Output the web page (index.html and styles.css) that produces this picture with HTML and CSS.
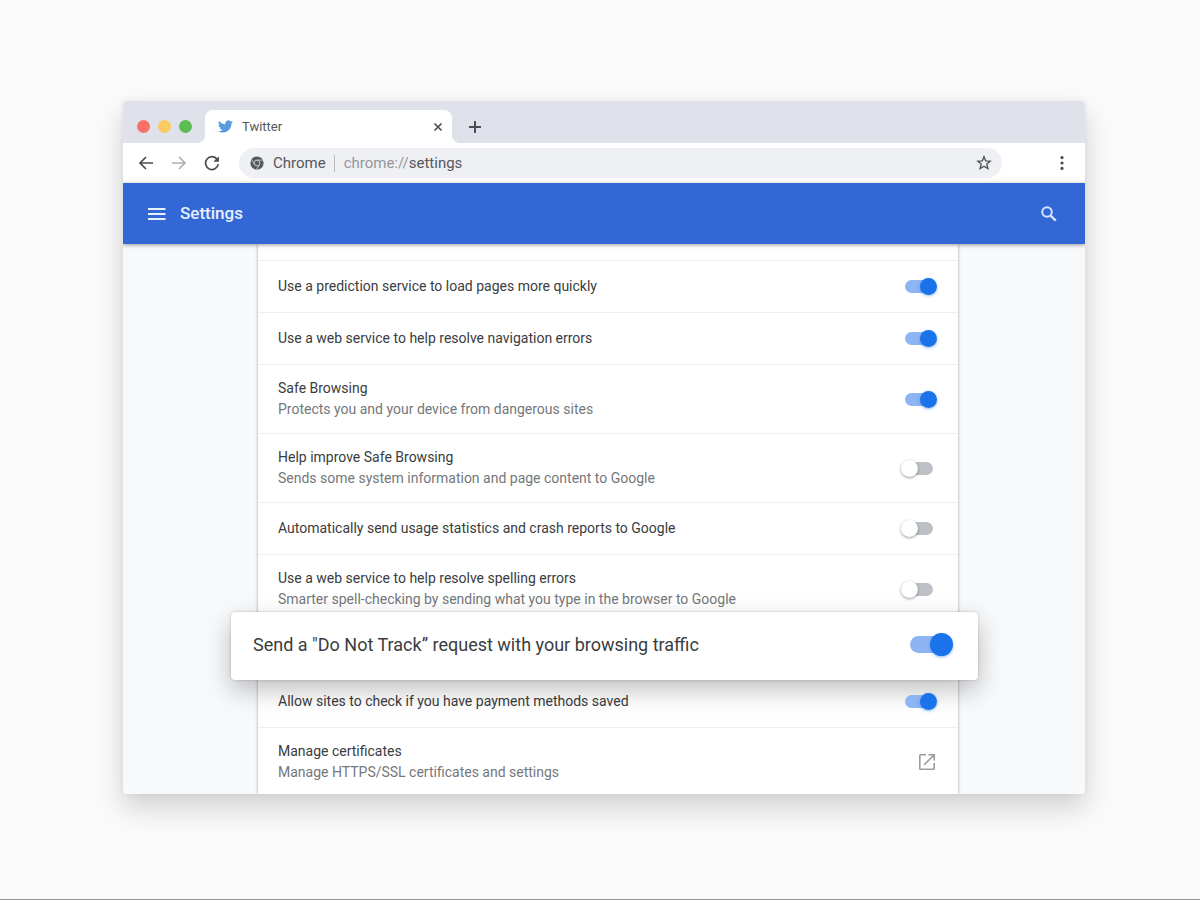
FILE: index.html
```
<!DOCTYPE html>
<html lang="en">
<head>
<meta charset="utf-8">
<title>Settings</title>
<link rel="stylesheet" href="styles.css">
</head>
<body>
<div class="window">
  <div class="tabstrip">
    <div class="lights"><span class="light red"></span><span class="light yellow"></span><span class="light green"></span></div>
    <div class="tab">
      <svg class="bird" viewBox="0 0 24 24" aria-hidden="true"><path fill="#5a9bdf" d="M23.95 4.57a10 10 0 0 1-2.82.78 4.96 4.96 0 0 0 2.16-2.72c-.95.55-2 .95-3.13 1.18a4.92 4.92 0 0 0-8.38 4.48C7.69 8.1 4.07 6.13 1.64 3.16a4.93 4.93 0 0 0 1.52 6.57 4.9 4.9 0 0 1-2.23-.61v.06a4.92 4.92 0 0 0 3.95 4.83 5 5 0 0 1-2.21.08 4.94 4.94 0 0 0 4.6 3.42A9.87 9.87 0 0 1 0 19.54a13.99 13.99 0 0 0 7.55 2.21c9.05 0 14-7.5 14-13.98 0-.21 0-.42-.02-.63a9.94 9.94 0 0 0 2.46-2.55z"/></svg>
      <span class="tab-title">Twitter</span>
      <button class="icon-btn" aria-label="Close tab"><svg width="10" height="10" viewBox="0 0 10 10"><path d="M1.5 1.5l7 7M8.5 1.5l-7 7" stroke="#4a4d51" stroke-width="1.7"/></svg></button>
    </div>
    <button class="icon-btn new-tab" aria-label="New tab"><svg width="14" height="14" viewBox="0 0 14 14"><path d="M7 1v12M1 7h12" stroke="#4a4d51" stroke-width="2"/></svg></button>
  </div>
  <div class="toolbar">
    <button class="icon-btn" aria-label="Back"><svg width="16" height="16" viewBox="0 0 16 16"><path d="M15 8H2M8 2L2 8l6 6" fill="none" stroke="#4a4d51" stroke-width="1.7"/></svg></button>
    <button class="icon-btn" aria-label="Forward"><svg width="16" height="16" viewBox="0 0 16 16"><path d="M1 8h13M8 2l6 6-6 6" fill="none" stroke="#aeb0b3" stroke-width="1.7"/></svg></button>
    <button class="icon-btn" aria-label="Reload"><svg width="16" height="16" viewBox="0 0 16 16"><path d="M13.2 4.4A6.4 6.4 0 1 0 14.3 9.2" fill="none" stroke="#4a4d51" stroke-width="1.7"/><path d="M14.9 1.2v5.6H9.3z" fill="#4a4d51"/></svg></button>
    <div class="omnibox">
      <svg class="chrome" viewBox="0 0 14 14" aria-hidden="true"><circle cx="7" cy="7" r="6.6" fill="#55585c"/><circle cx="7" cy="7" r="2.9" fill="#55585c" stroke="#d4d6d9" stroke-width=".9"/><path d="M7 4.1h6M4.5 8.5L1.5 3.4M9.5 8.5l-3 5.1" stroke="#d4d6d9" stroke-width=".8"/></svg>
      <span class="site">Chrome</span>
      <span class="divider"></span>
      <span class="url"><span class="scheme">chrome://</span>settings</span>
      <button class="icon-btn" aria-label="Bookmark"><svg width="16" height="16" viewBox="0 0 16 16"><path d="M8 1.7l1.7 4.2 4.5.3-3.4 2.9 1.1 4.5L8 11.2l-3.9 2.4 1.1-4.5L1.8 6.2l4.5-.3z" fill="none" stroke="#4a4d51" stroke-width="1.3"/></svg></button>
    </div>
    <button class="icon-btn more" aria-label="Menu"><svg width="6" height="16" viewBox="0 0 6 16"><g fill="#4a4d51"><circle cx="3" cy="2.6" r="1.6"/><circle cx="3" cy="8" r="1.6"/><circle cx="3" cy="13.4" r="1.6"/></g></svg></button>
  </div>
  <header class="header">
    <button class="icon-btn" aria-label="Main menu"><svg width="18" height="14" viewBox="0 0 18 14"><path d="M0 2h17.5M0 7h17.5M0 12h17.5" stroke="#e8f0fe" stroke-width="2"/></svg></button>
    <h1 class="title">Settings</h1>
    <button class="icon-btn" aria-label="Search settings"><svg width="18" height="18" viewBox="0 0 18 18"><circle cx="7" cy="7" r="4.8" fill="none" stroke="#d6e4ff" stroke-width="2"/><path d="M10.5 10.5l5.2 5.2" stroke="#d6e4ff" stroke-width="2.4"/></svg></button>
  </header>
  <main class="content">
    <div class="list">
      <div class="row-end"></div>
      <label class="row"><span class="name">Use a prediction service to load pages more quickly</span><input class="toggle" type="checkbox" checked></label>
      <label class="row"><span class="name">Use a web service to help resolve navigation errors</span><input class="toggle" type="checkbox" checked></label>
      <label class="row"><span class="name">Safe Browsing<span class="desc">Protects you and your device from dangerous sites</span></span><input class="toggle" type="checkbox" checked></label>
      <label class="row"><span class="name">Help improve Safe Browsing<span class="desc">Sends some system information and page content to Google</span></span><input class="toggle" type="checkbox"></label>
      <label class="row"><span class="name">Automatically send usage statistics and crash reports to Google</span><input class="toggle" type="checkbox"></label>
      <label class="row"><span class="name">Use a web service to help resolve spelling errors<span class="desc">Smarter spell-checking by sending what you type in the browser to Google</span></span><input class="toggle" type="checkbox"></label>
      <div class="row spotlight">
        <label class="card"><span class="name">Send a "Do Not Track” request with your browsing traffic</span><input class="toggle large" type="checkbox" checked></label>
      </div>
      <label class="row"><span class="name">Allow sites to check if you have payment methods saved</span><input class="toggle" type="checkbox" checked></label>
      <div class="row last"><span class="name">Manage certificates<span class="desc">Manage HTTPS/SSL certificates and settings</span></span><button class="icon-btn" aria-label="Open certificates"><svg width="18" height="18" viewBox="0 0 18 18"><path d="M8 1.8H2.6a.8.8 0 0 0-.8.8v12.8c0 .4.4.8.8.8h12.8c.4 0 .8-.4.8-.8V10M10.5 1.8h5.7v5.7M16 2L6 12" fill="none" stroke="#9a9c9f" stroke-width="1.6"/></svg></button></div>
    </div>
  </main>
</div>
</body>
</html>
```
FILE: styles.css
```
* { box-sizing: border-box; }
body {
  margin: 0;
  min-height: 100vh;
  padding: 101px 115px 104px 123px;
  background: #fafafa;
  border-bottom: 1px solid #999;
  font-family: Roboto, "Liberation Sans", sans-serif;
  font-size: 14px;
  line-height: 21px;
  color: #3a3c40;
}
.window {
  overflow: hidden;
  border-radius: 4px;
  background: #fff;
  box-shadow: 0 14px 28px rgba(0, 0, 0, .16), 0 0 6px rgba(0, 0, 0, .07);
}
.icon-btn {
  display: flex;
  flex: none;
  padding: 0;
  border: 0;
  background: none;
}
.tabstrip {
  display: flex;
  align-items: flex-end;
  height: 42px;
  padding-left: 14px;
  background: #dfe2ea;
}
.lights {
  display: flex;
  gap: 8px;
  height: 34px;
  align-items: center;
  margin-right: 13px;
}
.light { width: 13px; height: 13px; border-radius: 50%; }
.red { background: #f87068; }
.yellow { background: #fbcb62; }
.green { background: #5cbd52; }
.tab {
  position: relative;
  display: flex;
  align-items: center;
  width: 247px;
  height: 33px;
  padding: 0 9px 0 13px;
  border-radius: 8px 8px 0 0;
  background: #fff;
  color: #54575b;
  font-size: 13px;
}
.tab::before, .tab::after {
  content: "";
  position: absolute;
  bottom: 0;
  width: 8px;
  height: 8px;
}
.tab::before { right: 100%; background: radial-gradient(circle at 0 0, transparent 8px, #fff 8px); }
.tab::after { left: 100%; background: radial-gradient(circle at 100% 0, transparent 8px, #fff 8px); }
.bird { width: 15px; height: 15px; margin-right: 9px; }
.tab-title { flex: 1; }
.new-tab { margin: 0 0 9px 16px; }
.toolbar {
  display: flex;
  align-items: center;
  gap: 17px;
  height: 40px;
  padding: 0 20px 0 15px;
}
.omnibox {
  display: flex;
  flex: 1;
  align-items: center;
  height: 30px;
  margin-left: 2px;
  padding: 0 10px 0 11px;
  border-radius: 15px;
  background: #eff0f4;
  color: #54575b;
  font-size: 15px;
}
.chrome { width: 14px; height: 14px; margin-right: 9px; }
.divider { width: 1px; height: 17px; margin: 0 9px 0 8px; background: #b8babd; }
.url { flex: 1; }
.scheme { color: #94969a; }
.more { margin-left: 40px; }
.header {
  position: relative;
  display: flex;
  align-items: center;
  height: 61px;
  padding: 0 27px 0 25px;
  background: #3367d6;
  box-shadow: 0 1px 4px rgba(0, 0, 0, .4);
}
.title {
  flex: 1;
  margin: 0 0 0 14px;
  color: #e8f0fe;
  font-size: 17px;
  font-weight: 500;
}
.content {
  padding: 0 127px 0 135px;
  background: #f8f9fb;
}
.list {
  background: #fff;
  box-shadow: 0 0 3px rgba(0, 0, 0, .35);
}
.row-end { height: 17px; border-bottom: 1px solid #eeeff0; }
.row {
  display: flex;
  align-items: center;
  min-height: 52px;
  padding: 13px 25px 13px 20px;
  border-bottom: 1px solid #eeeff0;
}
.name { flex: 1; }
.desc { display: block; color: #74777b; }
.last { padding: 13px 22px 11px 20px; border-bottom: 0; }
.toggle {
  position: relative;
  appearance: none;
  flex: none;
  width: 28px;
  height: 13px;
  margin: 0;
  border-radius: 9px;
  background: #bdc1c6;
}
.toggle::before {
  content: "";
  position: absolute;
  top: -2px;
  left: -4px;
  width: 17px;
  height: 17px;
  border-radius: 50%;
  background: #fff;
  box-shadow: 0 1px 3px rgba(0, 0, 0, .4);
}
.toggle:checked { background: #8db4f3; }
.toggle:checked::before {
  right: -4px;
  left: auto;
  background: #1a73e8;
  box-shadow: 0 1px 3px rgba(26, 115, 232, .5);
}
.large { width: 39px; height: 17px; }
.large::before { top: -3px; width: 23px; height: 23px; }
.spotlight { position: relative; }
.card {
  position: absolute;
  top: -12px;
  right: -20px;
  left: -27px;
  display: flex;
  align-items: center;
  height: 68px;
  padding: 0 29px 3px 22px;
  border-radius: 4px;
  background: #fff;
  box-shadow: 0 10px 26px rgba(0, 0, 0, .25), 0 0 3px rgba(0, 0, 0, .2);
  font-size: 18px;
}
```
